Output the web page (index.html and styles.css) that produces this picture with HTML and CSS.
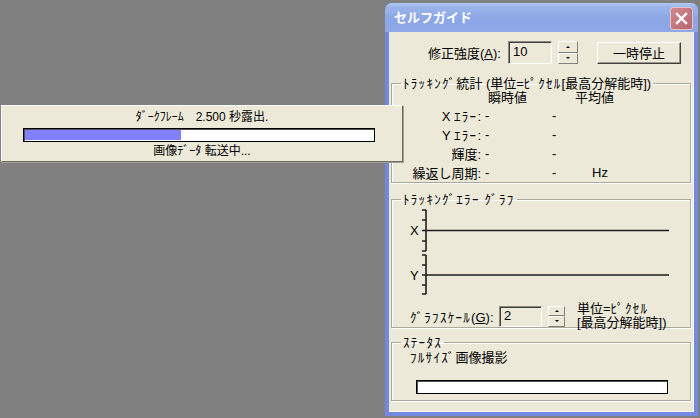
FILE: index.html
```html
<!DOCTYPE html>
<html lang="ja">
<head>
    <meta charset="UTF-8">
    <title>セルフガイド</title>
    <link rel="stylesheet" href="styles.css">
</head>
<body>
    <div class="window">
        <div class="titlebar">
            <span class="title">セルフガイド</span>
            <span class="close">
                <svg width="23" height="23" viewBox="0 0 23 23">
                    <path d="M7 7 L16 16 M16 7 L7 16" stroke="#fff" stroke-width="2.4" stroke-linecap="square"/>
                </svg>
            </span>
        </div>
        <div class="body">
            <div class="top-row">
                <span class="lbl">修正強度(<u>A</u>):</span>
                <div class="field">10</div>
                <div class="spin"><span class="up"></span><span class="down"></span></div>
                <button class="btn">一時停止</button>
            </div>

            <fieldset class="group stats">
                <legend><span class="hw">ﾄﾗｯｷﾝｸﾞ</span>統計 (単位=<span class="hw">ﾋﾟｸｾﾙ</span>[最高分解能時])</legend>
                <div class="grid">
                    <span></span>
                    <span class="head h1">瞬時値</span>
                    <span class="head h2">平均値</span>

                    <span class="name">X <span class="hw">ｴﾗｰ</span>:</span>
                    <span class="val">-</span>
                    <span class="val">-</span>
                    <span></span>

                    <span class="name">Y <span class="hw">ｴﾗｰ</span>:</span>
                    <span class="val">-</span>
                    <span class="val">-</span>
                    <span></span>

                    <span class="name">輝度:</span>
                    <span class="val">-</span>
                    <span class="val">-</span>
                    <span></span>

                    <span class="name">繰返し周期:</span>
                    <span class="val">-</span>
                    <span class="val">-</span>
                    <span class="unit">Hz</span>
                </div>
            </fieldset>

            <fieldset class="group graph">
                <legend><span class="hw">ﾄﾗｯｷﾝｸﾞｴﾗｰ ｸﾞﾗﾌ</span></legend>
                <svg class="plot" width="270" height="90" viewBox="0 0 270 90">
                    <g stroke="#1e1e1e" stroke-width="1.6" fill="none">
                        <path d="M21 3 V44 M17 3 H21 M17 13 H21 M17 23.5 H21 M17 34 H21 M17 44 H21"/>
                        <path d="M21 23.5 H264"/>
                        <path d="M21 48 V87 M17 48 H21 M17 58 H21 M17 68 H21 M17 78 H21 M17 87 H21"/>
                        <path d="M21 68 H264"/>
                    </g>
                    <text x="5" y="28" class="axis">X</text>
                    <text x="5" y="73" class="axis">Y</text>
                </svg>
                <div class="scale-row">
                    <span class="scale-lbl"><span class="hw">ｸﾞﾗﾌｽｹｰﾙ</span>(<u>G</u>):</span>
                    <div class="field small">2</div>
                    <div class="spin small"><span class="up"></span><span class="down"></span></div>
                    <div class="unit-note">単位=<span class="hw">ﾋﾟｸｾﾙ</span><br>[最高分解能時])</div>
                </div>
            </fieldset>

            <fieldset class="group status">
                <legend><span class="hw">ｽﾃｰﾀｽ</span></legend>
                <div class="status-text"><span class="hw">ﾌﾙｻｲｽﾞ</span>画像撮影</div>
                <div class="bar status-bar"></div>
            </fieldset>
        </div>
    </div>

    <div class="popup">
        <div class="popup-line">ﾀﾞｰｸﾌﾚｰﾑ　2.500 秒露出.</div>
        <div class="bar popup-bar"><div class="fill" style="width: 44.6%"></div></div>
        <div class="popup-line">画像ﾃﾞｰﾀ 転送中...</div>
    </div>
</body>
</html>
```

FILE: styles.css
```css
* {
    box-sizing: border-box;
}
body {
    margin: 0;
    width: 700px;
    height: 418px;
    overflow: hidden;
    position: relative;
    background: #808080;
    font-family: "Liberation Sans", "Noto Sans CJK JP", sans-serif;
    font-size: 13px;
    color: #000;
}
/* half-width katakana runs, a bit wider like the bitmap UI font */
.hw {
    letter-spacing: 1.3px;
}

/* window */
.window {
    position: absolute;
    left: 385px;
    top: 3px;
    width: 313px;
    height: 413px;
    display: flex;
    flex-direction: column;
    background: #7488e0;
    border-radius: 7px 7px 0 0;
    overflow: hidden;
}
.titlebar {
    height: 29px;
    display: flex;
    align-items: center;
    justify-content: space-between;
    padding: 0 5px 0 9px;
    background: linear-gradient(#b3c8f3, #9ab4ea 15%, #8ba5e6 60%, #90aae8);
}
.title {
    color: #fff;
    font-weight: bold;
    font-size: 13px;
    padding-bottom: 2px;
}
.close {
    width: 23px;
    height: 23px;
    margin-top: 2px;
    border: 1px solid #e6c3c6;
    border-radius: 3px;
    background: linear-gradient(135deg, #cf8a8f, #b9666e);
    display: flex;
}
.close svg {
    margin: -1px;
}
.body {
    flex: 1;
    margin: 0 4px 4px;
    background: #ece9d8;
    box-shadow: inset -1px -1px 0 #f8f6ee;
}

/* controls */
.top-row {
    display: flex;
    align-items: center;
    height: 23px;
    margin-top: 9px;
    padding-left: 39px;
}
.lbl {
    width: 80px;
}
.field {
    width: 44px;
    height: 23px;
    padding: 2px 0 0 4px;
    font-size: 13px;
    background: #ece9d8;
    border: 1px solid;
    border-color: #8a8a80 #fff #fff #8a8a80;
    box-shadow: inset 1px 1px 0 #404040;
}
.spin {
    width: 20px;
    height: 23px;
    margin-left: 6px;
    display: flex;
    flex-direction: column;
}
.spin span {
    flex: 1;
    position: relative;
    background: #ece9d8;
    border: 1px solid;
    border-color: #fff #808080 #808080 #fff;
}
.spin span::after {
    content: "";
    position: absolute;
    left: 50%;
    top: 50%;
    margin: -1px 0 0 -2px;
    border-left: 2px solid transparent;
    border-right: 2px solid transparent;
}
.spin .up::after {
    border-bottom: 2px solid #000;
}
.spin .down::after {
    border-top: 2px solid #000;
}
.btn {
    width: 84px;
    height: 22px;
    margin-left: 19px;
    padding: 0;
    font: inherit;
    background: #ece9d8;
    border: 1px solid;
    border-color: #fff #404040 #404040 #fff;
    box-shadow: inset -1px -1px 0 #9a9889;
}

/* group boxes */
.group {
    width: 300px;
    margin: 0 0 0 2px;
    padding: 0;
    border: 1px solid #aaa99b;
    box-shadow: inset 1px 1px 0 #fff, 1px 1px 0 #fff;
}
.group legend {
    margin-left: 9px;
    padding: 0 2px;
    line-height: 15px;
}
.stats {
    margin-top: 12px;
    height: 107px;
}
.grid {
    display: grid;
    grid-template-columns: 89px 67px 44px 1fr;
    grid-auto-rows: 19px;
    align-items: center;
    margin-top: -4px;
}
.head.h1 {
    padding-left: 7px;
}
.head.h2 {
    grid-column: span 2;
    padding-left: 27px;
}
.name {
    text-align: right;
}
.val {
    padding-left: 4px;
}

.graph {
    margin-top: 9px;
    height: 136px;
}
.plot {
    display: block;
    margin: 0 0 0 13px;
}
.axis {
    font-family: "Liberation Sans", sans-serif;
    font-size: 13px;
}
.scale-row {
    display: flex;
    align-items: center;
    margin-top: 5px;
    padding-left: 18px;
}
.scale-lbl {
    width: 89px;
}
.field.small {
    width: 43px;
    height: 21px;
    padding-top: 1px;
}
.spin.small {
    width: 17px;
    height: 21px;
}
.unit-note {
    margin-left: 12px;
    line-height: 14px;
}

.status {
    margin-top: 7px;
    height: 66px;
}
.status-text {
    padding-left: 18px;
    line-height: 15px;
}
.bar {
    background: #fff;
    border: 1px solid #000;
    box-shadow: inset 1px 1px 0 #505050;
}
.status-bar {
    width: 252px;
    height: 14px;
    margin: 15px 0 0 24px;
}

/* progress popup */
.popup {
    position: absolute;
    left: 1px;
    top: 105px;
    width: 402px;
    height: 57px;
    padding-top: 5px;
    background: #ece9d8;
    border: 1px solid;
    border-color: #fff #6f6d62 #6f6d62 #fff;
    box-shadow: 1px 1px 0 #a09e92;
    display: flex;
    flex-direction: column;
    align-items: center;
    font-size: 12px;
}
.popup-line {
    line-height: 13px;
}
.popup-bar {
    width: 352px;
    height: 14px;
    margin: 4px 0 3px -6px;
    padding: 1px 0 1px 1px;
}
.fill {
    height: 100%;
    background: #8080ff;
}
```
